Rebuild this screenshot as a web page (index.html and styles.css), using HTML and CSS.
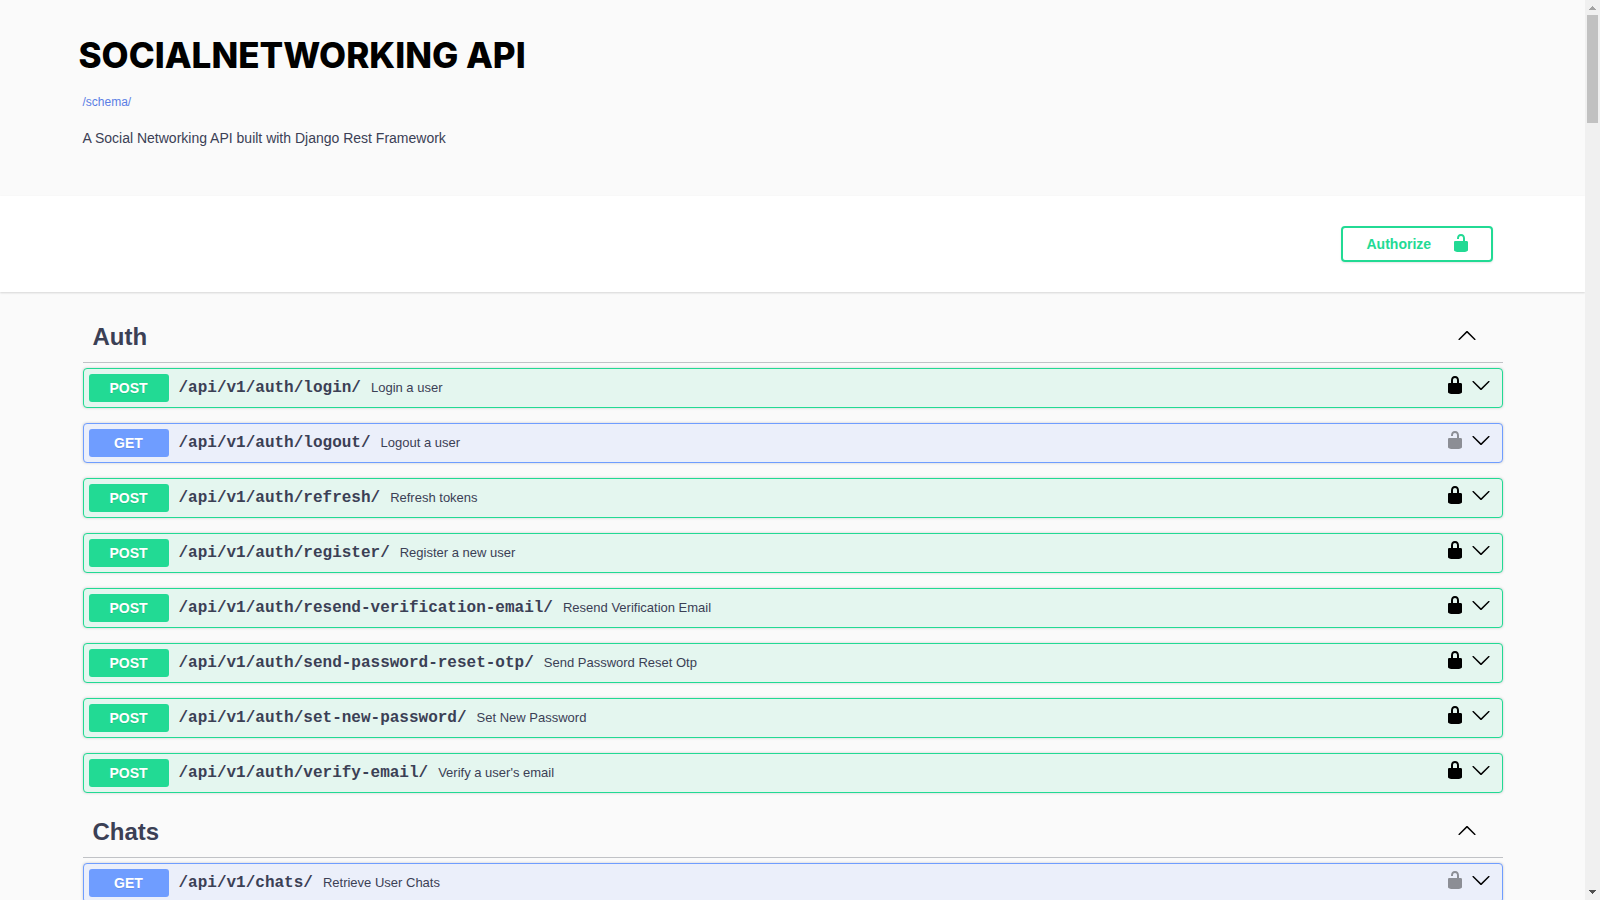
FILE: index.html
```
<!DOCTYPE html>
<html lang="en">
<head>
<meta charset="utf-8">
<title>SOCIALNETWORKING API</title>
<link rel="stylesheet" href="styles.css">
</head>
<body>
<svg class="sprite" aria-hidden="true">
  <symbol id="locked" viewBox="0 0 20 20"><path d="M15.8 8H14V5.6C14 2.703 12.665 1 10 1 7.334 1 6 2.703 6 5.6V8H4c-.553 0-1 .646-1 1.199V17c0 .549.428 1.139.951 1.307l1.197.387C5.672 18.861 6.55 19 7.1 19h5.8c.549 0 1.428-.139 1.951-.307l1.196-.387c.524-.167.953-.757.953-1.306V9.199C17 8.646 16.352 8 15.8 8zM12 8H8V5.199C8 3.754 8.797 3 10 3c1.203 0 2 .754 2 2.199V8z"/></symbol>
  <symbol id="unlocked" viewBox="0 0 20 20"><path d="M15.8 8H14V5.6C14 2.703 12.665 1 10 1 7.334 1 6 2.703 6 5.6V6h2v-.801C8 3.754 8.797 3 10 3c1.203 0 2 .754 2 2.199V8H4c-.553 0-1 .646-1 1.199V17c0 .549.428 1.139.951 1.307l1.197.387C5.672 18.861 6.55 19 7.1 19h5.8c.549 0 1.428-.139 1.951-.307l1.196-.387c.524-.167.953-.757.953-1.306V9.199C17 8.646 16.352 8 15.8 8z"/></symbol>
  <symbol id="arrow-down" viewBox="0 0 20 20"><path d="M17.418 6.109c.272-.268.709-.268.979 0s.271.701 0 .969l-7.908 7.83c-.27.268-.707.268-.979 0l-7.908-7.83c-.27-.268-.27-.701 0-.969.271-.268.709-.268.979 0L10 13.25l7.418-7.141z"/></symbol>
  <symbol id="arrow-up" viewBox="0 0 20 20"><path d="M17.418 14.908c.272.268.709.268.979 0s.271-.701 0-.969l-7.908-7.83c-.27-.268-.707-.268-.979 0l-7.908 7.83c-.27.268-.27.701 0 .969.271.268.709.268.979 0L10 7.767l7.418 7.141z"/></symbol>
</svg>
<div class="viewport">
  <div class="page">
    <header class="info">
      <div class="wrapper">
        <h1 class="title">SOCIALNETWORKING API</h1>
        <a class="schema-link" href="/schema/">/schema/</a>
        <p class="description">A Social Networking API built with Django Rest Framework</p>
      </div>
    </header>
    <section class="scheme-bar">
      <div class="wrapper scheme-inner">
        <button class="authorize" type="button"><span>Authorize</span><svg class="icon"><use href="#unlocked"/></svg></button>
      </div>
    </section>
    <main class="wrapper operations">
      <section class="tag">
        <h2 class="tag-header"><span>Auth</span><button class="icon-button" type="button" aria-label="Collapse Auth"><svg class="icon"><use href="#arrow-up"/></svg></button></h2>
        <div class="op post"><button class="summary" type="button"><span class="method">POST</span><span class="path">/api/v1/auth/login/</span><span class="text">Login a user</span></button><div class="actions"><button class="icon-button" type="button" aria-label="Authorization"><svg class="icon"><use href="#locked"/></svg></button><button class="icon-button" type="button" aria-label="Expand"><svg class="icon"><use href="#arrow-down"/></svg></button></div></div>
        <div class="op get"><button class="summary" type="button"><span class="method">GET</span><span class="path">/api/v1/auth/logout/</span><span class="text">Logout a user</span></button><div class="actions"><button class="icon-button open" type="button" aria-label="Authorization"><svg class="icon"><use href="#unlocked"/></svg></button><button class="icon-button" type="button" aria-label="Expand"><svg class="icon"><use href="#arrow-down"/></svg></button></div></div>
        <div class="op post"><button class="summary" type="button"><span class="method">POST</span><span class="path">/api/v1/auth/refresh/</span><span class="text">Refresh tokens</span></button><div class="actions"><button class="icon-button" type="button" aria-label="Authorization"><svg class="icon"><use href="#locked"/></svg></button><button class="icon-button" type="button" aria-label="Expand"><svg class="icon"><use href="#arrow-down"/></svg></button></div></div>
        <div class="op post"><button class="summary" type="button"><span class="method">POST</span><span class="path">/api/v1/auth/register/</span><span class="text">Register a new user</span></button><div class="actions"><button class="icon-button" type="button" aria-label="Authorization"><svg class="icon"><use href="#locked"/></svg></button><button class="icon-button" type="button" aria-label="Expand"><svg class="icon"><use href="#arrow-down"/></svg></button></div></div>
        <div class="op post"><button class="summary" type="button"><span class="method">POST</span><span class="path">/api/v1/auth/resend-verification-email/</span><span class="text">Resend Verification Email</span></button><div class="actions"><button class="icon-button" type="button" aria-label="Authorization"><svg class="icon"><use href="#locked"/></svg></button><button class="icon-button" type="button" aria-label="Expand"><svg class="icon"><use href="#arrow-down"/></svg></button></div></div>
        <div class="op post"><button class="summary" type="button"><span class="method">POST</span><span class="path">/api/v1/auth/send-password-reset-otp/</span><span class="text">Send Password Reset Otp</span></button><div class="actions"><button class="icon-button" type="button" aria-label="Authorization"><svg class="icon"><use href="#locked"/></svg></button><button class="icon-button" type="button" aria-label="Expand"><svg class="icon"><use href="#arrow-down"/></svg></button></div></div>
        <div class="op post"><button class="summary" type="button"><span class="method">POST</span><span class="path">/api/v1/auth/set-new-password/</span><span class="text">Set New Password</span></button><div class="actions"><button class="icon-button" type="button" aria-label="Authorization"><svg class="icon"><use href="#locked"/></svg></button><button class="icon-button" type="button" aria-label="Expand"><svg class="icon"><use href="#arrow-down"/></svg></button></div></div>
        <div class="op post"><button class="summary" type="button"><span class="method">POST</span><span class="path">/api/v1/auth/verify-email/</span><span class="text">Verify a user's email</span></button><div class="actions"><button class="icon-button" type="button" aria-label="Authorization"><svg class="icon"><use href="#locked"/></svg></button><button class="icon-button" type="button" aria-label="Expand"><svg class="icon"><use href="#arrow-down"/></svg></button></div></div>
      </section>
      <section class="tag">
        <h2 class="tag-header"><span>Chats</span><button class="icon-button" type="button" aria-label="Collapse Chats"><svg class="icon"><use href="#arrow-up"/></svg></button></h2>
        <div class="op get"><button class="summary" type="button"><span class="method">GET</span><span class="path">/api/v1/chats/</span><span class="text">Retrieve User Chats</span></button><div class="actions"><button class="icon-button open" type="button" aria-label="Authorization"><svg class="icon"><use href="#unlocked"/></svg></button><button class="icon-button" type="button" aria-label="Expand"><svg class="icon"><use href="#arrow-down"/></svg></button></div></div>
      </section>
    </main>
  </div>
  <div class="scrollbar" aria-hidden="true">
    <svg class="scroll-arrow up" viewBox="0 0 15 15" shape-rendering="crispEdges"><path d="M7 6h1v1h1v1h1v1h1v1H4V9h1V8h1V7h1z"/></svg>
    <div class="thumb"></div>
    <svg class="scroll-arrow down" viewBox="0 0 15 15" shape-rendering="crispEdges"><path d="M4 5h7v1h-1v1H9v1H8v1H7V8H6V7H5V6H4z"/></svg>
  </div>
</div>
</body>
</html>
```
FILE: styles.css
```
* {
  box-sizing: border-box;
}

body {
  margin: 0;
  background: #fafafa;
  color: #3b4055;
  font-family: "Liberation Sans", Arial, sans-serif;
}

button {
  margin: 0;
  padding: 0;
  border: 0;
  background: none;
  color: inherit;
  font: inherit;
  cursor: pointer;
}

.sprite {
  display: none;
}

.icon {
  display: block;
  flex: none;
  width: 20px;
  height: 20px;
  fill: currentColor;
}

.viewport {
  display: grid;
  grid-template-columns: minmax(0, 1fr) 15px;
  height: 100vh;
}

.page {
  overflow: hidden;
}

.wrapper {
  width: 100%;
  max-width: 1460px;
  margin: 0 auto;
  padding: 0 20px;
}

.info {
  padding: 33px 0 50px;
}

.title {
  margin: 0 0 18px -4px;
  color: #000;
  font: 800 35px/44px Inter, sans-serif;
}

.schema-link {
  display: block;
  width: fit-content;
  color: #5a7ee5;
  font-size: 12px;
  line-height: 14px;
  text-decoration: none;
}

.description {
  margin: 21px 0 0;
  font-size: 14px;
  line-height: 16px;
}

.scheme-bar {
  padding: 30px 0;
  background: #fff;
  box-shadow: 0 1px 2px rgba(0, 0, 0, 0.15);
}

.scheme-inner {
  display: flex;
  justify-content: flex-end;
}

.authorize {
  display: flex;
  justify-content: space-between;
  width: 152px;
  height: 36px;
  margin-right: 10px;
  padding: 5px 20px 7px 24px;
  border: 2px solid #22da94;
  border-radius: 4px;
  box-shadow: 0 1px 2px rgba(0, 0, 0, 0.1);
  color: #22da94;
  font-size: 14px;
  font-weight: 700;
  line-height: 22px;
}

.operations {
  padding-top: 21px;
}

.tag-header {
  display: flex;
  align-items: center;
  justify-content: space-between;
  margin: 0 0 5px;
  padding: 9px 26px 11px 10px;
  border-bottom: 1px solid rgba(59, 65, 81, 0.3);
  font-size: 24px;
  line-height: 29px;
}

.tag-header .icon-button {
  margin-bottom: 3px;
}

.op {
  display: flex;
  margin-bottom: 15px;
  padding: 5px;
  border: 1px solid;
  border-radius: 4px;
  box-shadow: 0 0 3px rgba(0, 0, 0, 0.19);
}

.post {
  border-color: #22da94;
  background: #e4f6ef;
}

.get {
  border-color: #6f9dff;
  background: #ebeffa;
}

.summary {
  display: flex;
  flex: 1;
  align-items: center;
  gap: 10px;
  text-align: left;
}

.method {
  width: 80px;
  border-radius: 3px;
  color: #fff;
  font-size: 14px;
  font-weight: 700;
  line-height: 28px;
  text-align: center;
  text-shadow: 0 1px 0 rgba(0, 0, 0, 0.1);
}

.post .method {
  background: #22da94;
}

.get .method {
  background: #6f9dff;
}

.path {
  font: 700 16px/18px "Liberation Mono", monospace;
}

.text {
  font-size: 13px;
  line-height: 16px;
}

.actions {
  display: flex;
  gap: 6px;
  padding: 1px 6px 0 0;
}

.icon-button {
  display: block;
  height: 20px;
  color: #000;
}

.open {
  opacity: 0.4;
}

.scrollbar {
  display: flex;
  flex-direction: column;
  background: #f0f0f0;
}

.scroll-arrow {
  width: 15px;
  height: 15px;
}

.up {
  fill: #a3a3a3;
}

.down {
  margin-top: auto;
  fill: #505050;
}

.thumb {
  height: 12%;
  margin: 0 2px;
  background: #c1c1c1;
}
```
